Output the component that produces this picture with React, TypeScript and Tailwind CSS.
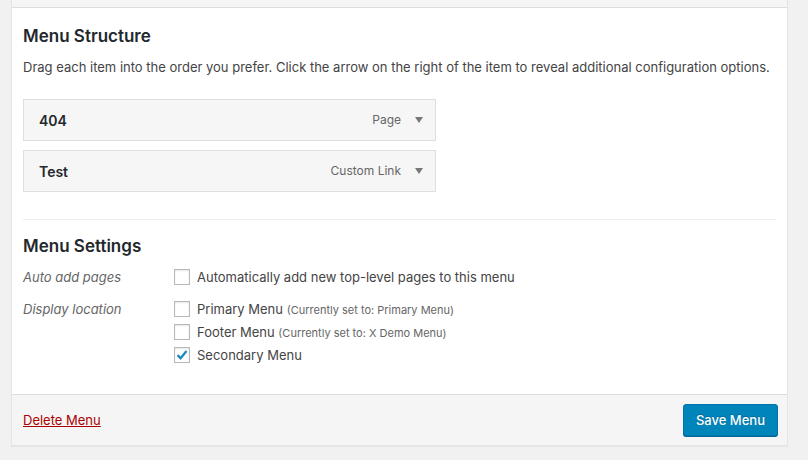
import React from "react";

const font = { fontFamily: 'Inter, "Liberation Sans", Arial, sans-serif' };

function Checkbox({ checked }: { checked?: boolean }) {
  return (
    <span className="w-[16px] h-[16px] shrink-0 border border-[#b4b9be] bg-white shadow-[inset_0_1px_2px_rgba(0,0,0,0.1)] flex items-center justify-center">
      {checked && (
        <svg width="14" height="14" viewBox="0 0 14 14">
          <path d="M2.5 7.2 L5.6 10.2 L11.5 3" fill="none" stroke="#1e8cbe" strokeWidth="2.3" />
        </svg>
      )}
    </span>
  );
}

function Item({ title, type }: { title: string; type: string }) {
  return (
    <div className="w-[413px] h-[42px] border border-[#dfdfdf] bg-[#f6f6f6] flex items-center pl-[15px] pr-[12px]">
      <span className="text-[14px] font-semibold text-[#23282d] flex-1">{title}</span>
      <span className="text-[12px] text-[#666]">{type}</span>
      <svg width="8" height="6" viewBox="0 0 8 6" className="ml-[14px]">
        <path d="M0 0 L8 0 L4 6 Z" fill="#777" />
      </svg>
    </div>
  );
}

export default function App() {
  return (
    <div className="w-[808px] h-[460px] bg-[#f1f1f1] pl-[11px] overflow-hidden" style={font}>
      <div className="w-[777px] border-x border-b border-[#e5e5e5] shadow-[0_1px_1px_rgba(0,0,0,0.04)]">
        <div className="h-[8px] bg-[#f5f5f5] border-b border-[#dddddd]" />
        <div className="bg-white px-[11px] pt-[17px] pb-[30px]">
          <h3 className="text-[17px] font-semibold text-[#23282d] leading-[22px]">Menu Structure</h3>
          <p className="text-[13px] text-[#444] leading-[18px] mt-[11px]">
            Drag each item into the order you prefer. Click the arrow on the right of the item to reveal additional configuration options.
          </p>
          <div className="mt-[23px] flex flex-col gap-[9px]">
            <Item title="404" type="Page" />
            <Item title="Test" type="Custom Link" />
          </div>
          <div className="mt-[27px] border-t border-[#eeeeee]" />
          <h3 className="text-[17px] font-semibold text-[#23282d] leading-[22px] mt-[15px]">Menu Settings</h3>
          <div className="mt-[11px] flex text-[13px] text-[#444]">
            <div className="w-[151px] italic text-[#666] leading-[18px]">Auto add pages</div>
            <label className="flex items-center gap-[7px] h-[18px] leading-[18px]">
              <Checkbox />
              <span>Automatically add new top-level pages to this menu</span>
            </label>
          </div>
          <div className="mt-[14px] flex text-[13px] text-[#444]">
            <div className="w-[151px] italic text-[#666] leading-[18px]">Display location</div>
            <div className="flex flex-col gap-[5px]">
              <label className="flex items-center gap-[7px] h-[18px] leading-[18px]">
                <Checkbox />
                <span>
                  Primary Menu <span className="text-[11px] text-[#666]">(Currently set to: Primary Menu)</span>
                </span>
              </label>
              <label className="flex items-center gap-[7px] h-[18px] leading-[18px]">
                <Checkbox />
                <span>
                  Footer Menu <span className="text-[11px] text-[#666]">(Currently set to: X Demo Menu)</span>
                </span>
              </label>
              <label className="flex items-center gap-[7px] h-[18px] leading-[18px]">
                <Checkbox checked />
                <span>Secondary Menu</span>
              </label>
            </div>
          </div>
        </div>
        <div className="h-[51px] bg-[#f5f5f5] border-t border-[#dddddd] flex items-center justify-between pl-[11px] pr-[9px]">
          <a className="text-[13px] text-[#a00] underline leading-[18px]">Delete Menu</a>
          <button className="h-[32px] px-[12px] bg-[#0085ba] border border-[#0073aa] rounded-[3px] shadow-[0_1px_0_#006799] text-white text-[13px] font-medium leading-[28px] [text-shadow:0_-1px_1px_#006799]">
            Save Menu
          </button>
        </div>
      </div>
    </div>
  );
}
